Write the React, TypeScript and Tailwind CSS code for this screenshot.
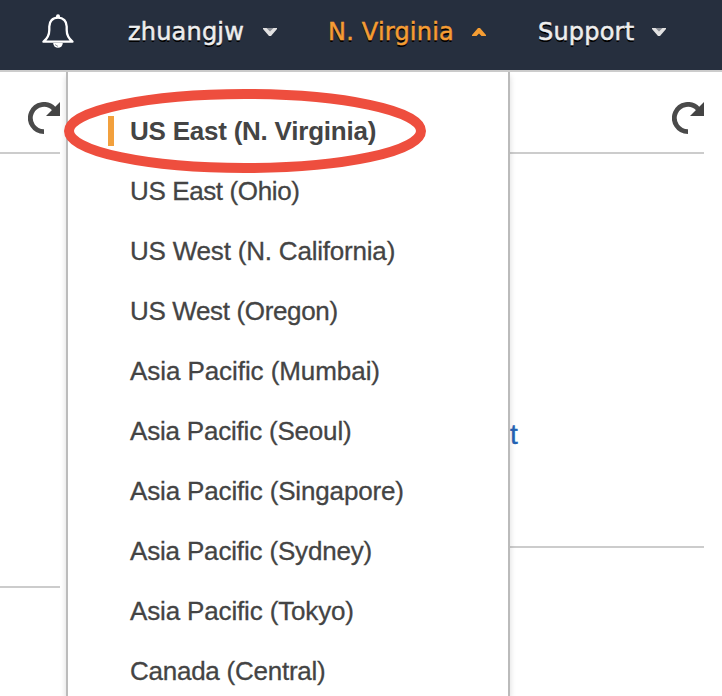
const regions = [
  { name: "US East (N. Virginia)", tracking: "tracking-[-0.23px]", active: true },
  { name: "US East (Ohio)", tracking: "tracking-[-0.38px]" },
  { name: "US West (N. California)", tracking: "tracking-[-0.2px]" },
  { name: "US West (Oregon)", tracking: "tracking-[-0.35px]" },
  { name: "Asia Pacific (Mumbai)", tracking: "tracking-[-0.07px]" },
  { name: "Asia Pacific (Seoul)", tracking: "tracking-[-0.2px]" },
  { name: "Asia Pacific (Singapore)", tracking: "tracking-[-0.15px]" },
  { name: "Asia Pacific (Sydney)", tracking: "tracking-[-0.17px]" },
  { name: "Asia Pacific (Tokyo)", tracking: "tracking-[-0.15px]" },
  { name: "Canada (Central)", tracking: "tracking-[-0.25px]" },
];

function Bell() {
  return (
    <svg width="32" height="36" viewBox="0 0 32 36" fill="none" className="shrink-0">
      <path d="M11.2 29a4.8 4.8 0 0 0 9.6 0Z" fill="#fff" />
      <path d="M13 30.6l3 1.8" stroke="#8b919a" strokeWidth="1" />
      <circle cx="16" cy="2.2" r="2" fill="#fff" />
      <path
        d="M16 3.6C10.6 3.6 7.3 7.4 7.3 12.4V16C7.3 21 5.6 24.3 1.5 27.7H30.5C26.4 24.3 24.7 21 24.7 16V12.4C24.7 7.4 21.4 3.6 16 3.6Z"
        stroke="#fff"
        strokeWidth="2.3"
        strokeLinejoin="round"
      />
    </svg>
  );
}

function Caret({ up = false }: { up?: boolean }) {
  return (
    <svg width="14" height="10" viewBox="0 0 14 10" className="mt-[2px] shrink-0">
      {up ? (
        <path d="M0 8V7L6 0H8L14 7V8H9.5L7 5.6L4.5 8Z" fill="#f59d33" />
      ) : (
        <>
          <path d="M2 0H12L7 6Z" fill="#8b8f96" />
          <path d="M0 0H3.5L7 3.4L10.5 0H14V1L8 8H6L0 1Z" fill="#e2e2e2" />
        </>
      )}
    </svg>
  );
}

function Refresh() {
  return (
    <svg width="32" height="32" viewBox="0 0 32 32" className="shrink-0">
      <path d="M16 29.6A13.6 13.6 0 1 1 26 6.8" fill="none" stroke="#4a4a4a" strokeWidth="4.8" />
      <path d="M32 0V14H18Z" fill="#444" />
    </svg>
  );
}

export default function App() {
  return (
    <div className="relative flex h-[696px] w-[722px] flex-col overflow-hidden bg-white font-['Liberation_Sans',Arial,sans-serif]">
      <header className="flex h-[72px] shrink-0 items-start border-b-2 border-[#ccc] bg-[#262f3e] pt-[14px] pl-[42px] font-['DejaVu_Sans',Verdana,sans-serif] text-[24px] leading-[36px] tracking-[0.2px] text-[#eee]">
        <Bell />
        <button className="mt-px ml-[54px] flex h-[34px] w-[149px] items-center justify-between">
          <span className="whitespace-nowrap [-webkit-text-stroke:0.5px_currentColor] [text-shadow:0_2px_0_#000]">zhuangjw</span>
          <Caret />
        </button>
        <button className="mt-px ml-[51px] flex h-[34px] w-[158px] items-center justify-between text-[#f59d33]">
          <span className="whitespace-nowrap [-webkit-text-stroke:0.5px_currentColor] [text-shadow:0_2px_0_#000]">N. Virginia</span>
          <Caret up />
        </button>
        <button className="mt-px ml-[52px] flex h-[34px] w-[128px] items-center justify-between">
          <span className="whitespace-nowrap [-webkit-text-stroke:0.5px_currentColor] [text-shadow:0_2px_0_#000]">Support</span>
          <Caret />
        </button>
      </header>

      <main className="flex flex-1 justify-between pr-[18px]">
        <section className="w-[60px]">
          <div className="flex h-[82px] justify-end border-b-2 border-[#ccc] pt-[30px]">
            <Refresh />
          </div>
          <div className="h-[434px] border-b-2 border-[#ccc]" />
        </section>
        <section className="w-[194px]">
          <div className="flex h-[82px] justify-end border-b-2 border-[#ccc] pt-[30px]">
            <Refresh />
          </div>
          <div className="h-[394px] border-b-2 border-[#ccc] pt-[266px]">
            <a className="block text-[28px] leading-[30px] text-[#2463b5] [-webkit-text-stroke:0.4px_currentColor]">t</a>
          </div>
        </section>
      </main>

      <nav className="absolute top-[72px] left-[66px] h-[624px] w-[444px] overflow-hidden border-x-2 border-[#bbb] bg-white pt-[29px] shadow-[0_4px_6px_rgba(0,0,0,0.15)]">
        <ul>
          {regions.map((r) => (
            <li key={r.name} className="flex h-[60px] items-center pl-[40px] text-[26px] text-[#444]">
              <span className={r.active ? "h-[30px] w-[6px] bg-[#f2a03d]" : "h-[30px] w-[6px]"} />
              <span
                className={`ml-[16px] whitespace-nowrap ${r.tracking} ${r.active ? "font-bold" : "[-webkit-text-stroke:0.3px_currentColor]"}`}
              >
                {r.name}
              </span>
            </li>
          ))}
        </ul>
      </nav>

      <svg className="pointer-events-none absolute top-[89px] left-[64px]" width="362" height="84" viewBox="0 0 362 84">
        <ellipse cx="181" cy="42" rx="176" ry="37" fill="none" stroke="#ee4e3e" strokeWidth="10" />
      </svg>
    </div>
  );
}
